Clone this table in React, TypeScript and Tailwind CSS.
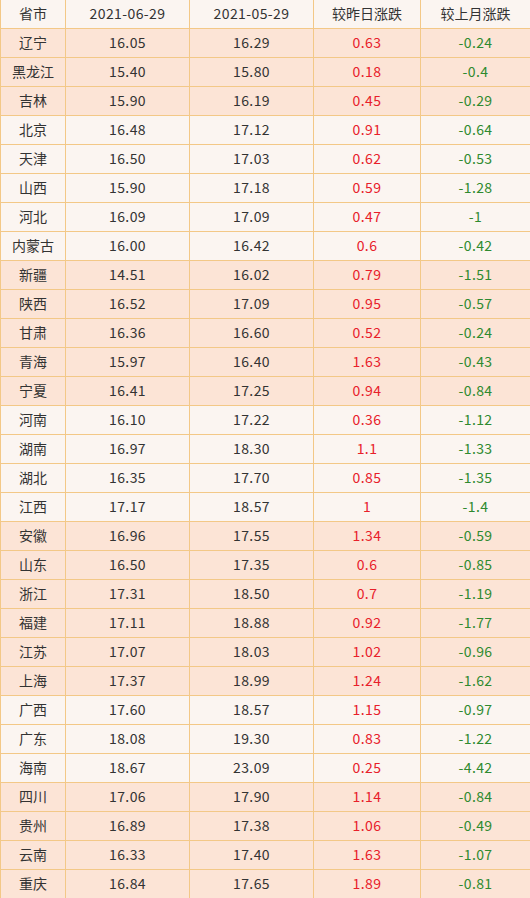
const rows: [string, string, string, string, string, boolean][] = [
  ['辽宁', '16.05', '16.29', '0.63', '-0.24', true],
  ['黑龙江', '15.40', '15.80', '0.18', '-0.4', true],
  ['吉林', '15.90', '16.19', '0.45', '-0.29', true],
  ['北京', '16.48', '17.12', '0.91', '-0.64', false],
  ['天津', '16.50', '17.03', '0.62', '-0.53', false],
  ['山西', '15.90', '17.18', '0.59', '-1.28', false],
  ['河北', '16.09', '17.09', '0.47', '-1', false],
  ['内蒙古', '16.00', '16.42', '0.6', '-0.42', false],
  ['新疆', '14.51', '16.02', '0.79', '-1.51', true],
  ['陕西', '16.52', '17.09', '0.95', '-0.57', true],
  ['甘肃', '16.36', '16.60', '0.52', '-0.24', true],
  ['青海', '15.97', '16.40', '1.63', '-0.43', true],
  ['宁夏', '16.41', '17.25', '0.94', '-0.84', true],
  ['河南', '16.10', '17.22', '0.36', '-1.12', false],
  ['湖南', '16.97', '18.30', '1.1', '-1.33', false],
  ['湖北', '16.35', '17.70', '0.85', '-1.35', false],
  ['江西', '17.17', '18.57', '1', '-1.4', false],
  ['安徽', '16.96', '17.55', '1.34', '-0.59', true],
  ['山东', '16.50', '17.35', '0.6', '-0.85', true],
  ['浙江', '17.31', '18.50', '0.7', '-1.19', true],
  ['福建', '17.11', '18.88', '0.92', '-1.77', true],
  ['江苏', '17.07', '18.03', '1.02', '-0.96', true],
  ['上海', '17.37', '18.99', '1.24', '-1.62', true],
  ['广西', '17.60', '18.57', '1.15', '-0.97', false],
  ['广东', '18.08', '19.30', '0.83', '-1.22', false],
  ['海南', '18.67', '23.09', '0.25', '-4.42', false],
  ['四川', '17.06', '17.90', '1.14', '-0.84', true],
  ['贵州', '16.89', '17.38', '1.06', '-0.49', true],
  ['云南', '16.33', '17.40', '1.63', '-1.07', true],
  ['重庆', '16.84', '17.65', '1.89', '-0.81', true],
];

const cell = 'border border-[#f3c887] text-center align-middle p-0';
const num = `${cell} tracking-[0.4px]`;

export default function App() {
  return (
    <div
      className="w-[530px] bg-white text-[14px] text-[#333333]"
      style={{ fontFamily: '"Noto Sans CJK SC", "Noto Sans", sans-serif' }}
    >
      <table className="w-[530px] table-fixed border-collapse">
        <colgroup>
          <col className="w-[65px]" />
          <col className="w-[124px]" />
          <col className="w-[124px]" />
          <col className="w-[107px]" />
          <col className="w-[110px]" />
        </colgroup>
        <thead>
          <tr className="h-[28px] bg-[#fbf5f1]">
            <th className={`${cell} border-t-0 font-normal`}>省市</th>
            <th className={`${num} border-t-0 font-normal`}>2021-06-29</th>
            <th className={`${num} border-t-0 font-normal`}>2021-05-29</th>
            <th className={`${cell} border-t-0 font-normal`}>较昨日涨跌</th>
            <th className={`${cell} border-t-0 font-normal`}>较上月涨跌</th>
          </tr>
        </thead>
        <tbody>
          {rows.map(([name, a, b, d, m, peach]) => (
            <tr
              key={name}
              className={`h-[29px] ${peach ? 'bg-[#fce4d6]' : 'bg-[#fbf5f1]'}`}
            >
              <td className={cell}>{name}</td>
              <td className={num}>{a}</td>
              <td className={num}>{b}</td>
              <td className={`${num} text-[#e8202a]`}>{d}</td>
              <td className={`${num} text-[#2f8a2f]`}>{m}</td>
            </tr>
          ))}
        </tbody>
      </table>
    </div>
  );
}
